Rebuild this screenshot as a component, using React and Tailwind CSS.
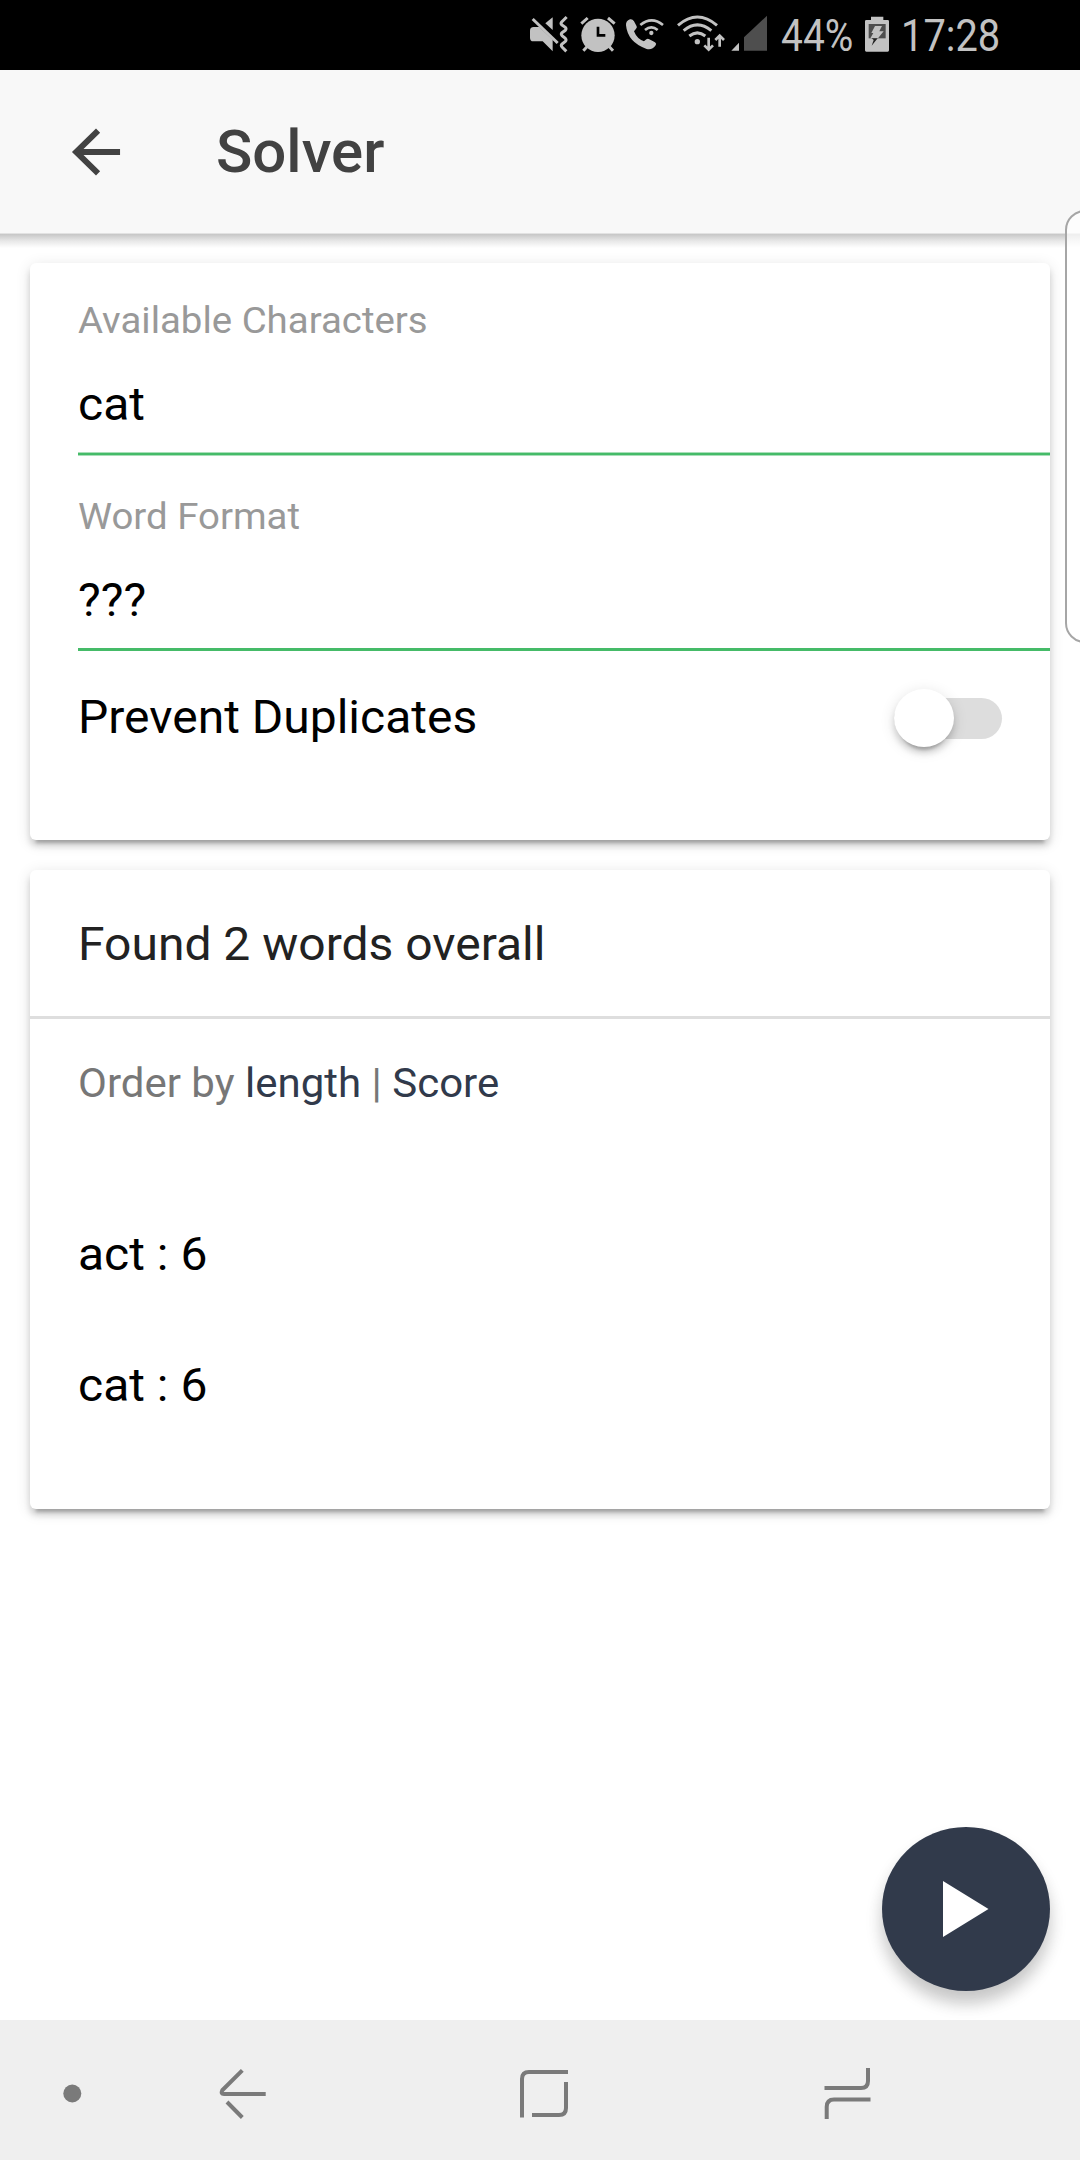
const words = [
  { word: 'act', score: 6 },
  { word: 'cat', score: 6 },
];

function Label({ className, children }) {
  return (
    <span className={`block origin-left scale-y-[0.973] leading-none whitespace-pre ${className}`}>
      {children}
    </span>
  );
}

function StatusIcons() {
  return (
    <svg className="block shrink-0" width="250" height="70" viewBox="0 0 750 210" fill="none" stroke="#c2c2c2" strokeWidth="9">
      <g fill="#c2c2c2" stroke="none">
        <path d="M30 92Q30 81 41 81H58L98 119V154L68 124H40Q30 124 30 113Z" />
        <path d="M98 52V90L76 70Z" />
      </g>
      <path d="M38 57L113 129" />
      <path d="M140 51L125 66Q121 71 126 75L136 82Q140 86 136 91L126 98Q122 102 126 107L136 115Q140 120 136 124L126 132Q122 137 126 141L139 154" />
      <circle cx="234" cy="106" r="50" fill="#c2c2c2" stroke="none" />
      <path d="M184 71L203 54M264 54L284 71M203 138L190 152M266 138L279 152" />
      <path d="M234 80V106H256" stroke="#000" strokeWidth="8" />
      <path d="M330 58Q337 56 342 64L350 79Q352 84 347 88L342 94Q351 117 372 124L379 118Q383 115 388 118L405 127Q411 131 407 136Q397 151 380 147Q323 127 318 76Q317 63 330 58Z" fill="#c2c2c2" stroke="none" />
      <circle cx="394" cy="99" r="6.500" fill="#c2c2c2" stroke="none" />
      <path d="M375 90Q394 74 413 90M361 75Q395 47 429 75" strokeWidth="8" />
      <circle cx="532" cy="125" r="8" fill="#c2c2c2" stroke="none" />
      <path d="M508 108Q532 89 556 108M491 92Q532 57 574 92M474 76Q532 26 591 76" />
      <path d="M566 113V148M553 136L566 149L579 136M599 140V107M586 120L599 107L612 120" strokeWidth="8" />
      <path d="M634 152L657 128V152Z" fill="#c2c2c2" stroke="none" />
      <path d="M672 152V112L741 47V152Z" fill="#4e4e4e" stroke="none" />
    </svg>
  );
}

function StatusBar() {
  return (
    <div className="flex h-[70px] items-center bg-black pl-[520px] text-[44px] leading-none text-[#c2c2c2]">
      <StatusIcons />
      <span className="mt-px ml-[11px] block w-[84px] origin-left scale-x-[0.885]">44%</span>
      <svg className="block shrink-0" width="24" height="70" viewBox="315 0 72 210">
        <path d="M333 60V50H370V60H383Q387 60 387 64V151Q387 155 383 155H319Q315 155 315 151V64Q315 60 319 60Z" fill="#c2c2c2" />
        <path d="M326 72H377V115H326Z" fill="#4d4d4d" />
        <path d="M345 78H366L358 94H371L354 115H331L340 99H334Z" fill="#c2c2c2" />
        <path d="M335 115H353L335 137L341 120Z" fill="#222" />
      </svg>
      <span className="mt-px ml-[12px] block w-[112px] origin-left scale-x-[0.905]">17:28</span>
    </div>
  );
}

function Header() {
  return (
    <header className="relative flex h-[163px] items-center bg-[#f8f8f8] pl-[60px] text-[#424242]">
      <svg className="block" width="72" height="70" viewBox="0 0 512 512" preserveAspectRatio="none" fill="currentColor">
        <path d="M427 234.600H167.300L285.600 115.200L256 85L85 256L256 427L285.200 396.800L167.300 277.400H427Z" />
      </svg>
      <h1 className="mt-[3px] ml-[84px]">
        <Label className="text-[60px] font-medium">Solver</Label>
      </h1>
      <div className="absolute inset-x-0 top-full h-[15px] border-t border-[#e2e2e2] bg-gradient-to-b from-[#c6c6c6] via-[#e8e8e8] to-white" />
    </header>
  );
}

function Card({ className, children }) {
  return (
    <section
      className={`rounded-[6px] bg-white shadow-[0_6px_6px_0_rgba(0,0,0,0.14),0_9px_3px_-6px_rgba(0,0,0,0.2),0_3px_15px_0_rgba(0,0,0,0.12)] ${className}`}
    >
      {children}
    </section>
  );
}

function Field({ label, value, lineClass }) {
  return (
    <div className="pl-12">
      <div className="flex h-[87px] items-center pt-[28px]">
        <Label className="text-[38.4px] text-[#999999]">{label}</Label>
      </div>
      <div className="flex h-[102px] items-center pt-[5px]">
        <Label className="text-[48px] text-black">{value}</Label>
      </div>
      <div className={lineClass} />
    </div>
  );
}

function Toggle() {
  return (
    <div className="relative h-[41px] w-[108px] rounded-full bg-[#dddddd]">
      <div className="absolute -top-[9px] left-0 h-[58px] w-[60px] rounded-[50%] bg-white shadow-[0_6px_6px_0_rgba(0,0,0,0.14),0_9px_3px_-6px_rgba(0,0,0,0.2),0_3px_15px_0_rgba(0,0,0,0.12)]" />
    </div>
  );
}

function NavBar() {
  return (
    <nav className="h-[140px] bg-[#efefef]">
      <svg className="block" width="1080" height="140" viewBox="0 0 1080 140" fill="none" stroke="#7a7a7a" strokeWidth="4">
        <circle cx="72.300" cy="73.500" r="9" fill="#7a7a7a" stroke="none" />
        <path d="M242.300 50.300L222.300 70.300Q220.500 74 224 74H265.700M227 82L242.300 97.500" />
        <path d="M522 97.500V59Q522 52 529 52H568M566 62V88Q566 95 559 95H532" />
        <path d="M868 48V61Q868 68 861 68H824.500M826.700 99V87Q826.700 79.500 834 79.500H870.500" />
      </svg>
    </nav>
  );
}

export default function App() {
  return (
    <div className="relative flex h-[2160px] w-[1080px] flex-col overflow-hidden bg-white font-['Roboto',sans-serif]">
      <StatusBar />
      <Header />
      <main className="flex grow flex-col gap-[30px] px-[30px] pt-[30px]">
        <Card className="flex h-[577px] flex-col gap-1">
          <Field
            label="Available Characters"
            value="cat"
            lineClass="h-1 -mb-px border-y border-[#a9dfb9] bg-[#45bb68]"
          />
          <Field label="Word Format" value="???" lineClass="h-[3px] bg-[#45bb68]" />
          <div className="-mt-1 flex h-[132px] items-center justify-between px-12">
            <Label className="text-[48px] text-black">Prevent Duplicates</Label>
            <div className="pt-[2px]">
              <Toggle />
            </div>
          </div>
        </Card>
        <Card className="h-[639px]">
          <div className="flex h-[149px] items-center border-b-[3px] border-[#dedede] px-12 pt-[2px]">
            <Label className="text-[48px] text-[#222222]">Found 2 words overall</Label>
          </div>
          <div className="flex h-[127px] items-center px-12">
            <Label className="text-[42px] text-[#777777]">
              Order by <a className="text-[#313a4b]">length</a> | <a className="text-[#313a4b]">Score</a>
            </Label>
          </div>
          <ul className="pt-[42px]">
            {words.map(({ word, score }) => (
              <li key={word} className="flex h-[131px] items-center px-12">
                <Label className="text-[48px] text-black">{`${word} : ${score}`}</Label>
              </li>
            ))}
          </ul>
        </Card>
      </main>
      <NavBar />
      <button
        aria-label="Solve"
        className="absolute top-[1827px] left-[882px] flex h-[164px] w-[168px] items-center rounded-[50%] bg-[#313a4b] pl-[61px] shadow-[0_12px_18px_0_rgba(0,0,0,0.14),0_12px_15px_0_rgba(0,0,0,0.1)]"
      >
        <svg width="46" height="56" viewBox="0 0 46 56" fill="#fff">
          <path d="M0 0L45.500 28L0 56Z" />
        </svg>
      </button>
      <div className="absolute top-[210px] left-[1065px] h-[433px] w-10 rounded-[20px] border-2 border-[#a6a6a6] bg-white/70" />
    </div>
  );
}
